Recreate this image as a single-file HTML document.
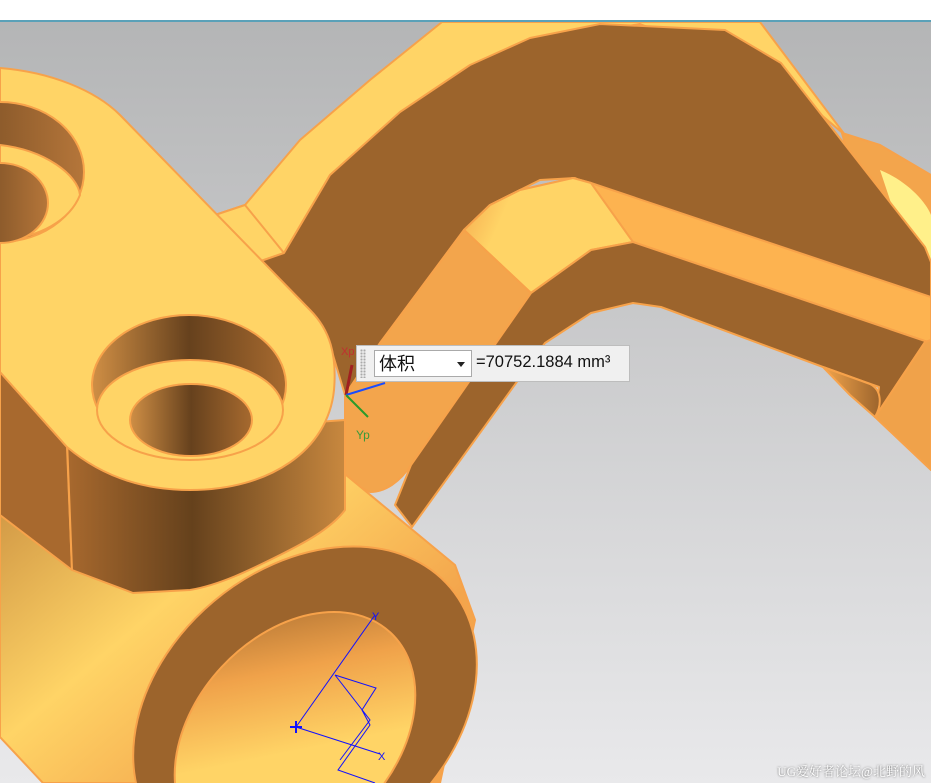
<!DOCTYPE html>
<html><head><meta charset="utf-8"><style>
html,body{margin:0;padding:0;width:931px;height:783px;overflow:hidden;background:#fff}
.top{position:absolute;left:0;top:0;width:931px;height:20px;background:#fff;border-bottom:2px solid #5aa1b8}
svg{position:absolute;left:0;top:0;display:block}
.box{position:absolute;left:356px;top:345px;width:272px;height:35px;background:#f0f0f0;border:1px solid #bdbdbd;font-family:"Liberation Sans","Noto Sans CJK SC",sans-serif}
.grip{position:absolute;left:3px;top:3px;width:6px;height:29px;background-image:radial-gradient(#aaa 1px,transparent 1.2px);background-size:3px 3px}
.sel{position:absolute;left:17px;top:4px;width:98px;height:27px;background:#fff;border:1px solid #aaa;font-size:18px;line-height:27px;padding-left:4px;box-sizing:border-box;color:#111}
.sel:after{content:"";position:absolute;right:6px;top:11px;border-left:4px solid transparent;border-right:4px solid transparent;border-top:5px solid #222}
.val{position:absolute;left:119px;top:7px;font-size:16.5px;color:#111}
.wm{position:absolute;right:6px;bottom:4px;font-family:"Liberation Serif","Noto Serif CJK SC",serif;font-size:13px;line-height:15px;color:#fff;text-shadow:0 0 2px #555}
</style></head><body>
<svg width="931" height="783" viewBox="0 0 931 783">
<defs>
<linearGradient id="bg" x1="0" y1="0" x2="0" y2="1"><stop offset="0" stop-color="#b4b5b6"/><stop offset="1" stop-color="#e9e9eb"/></linearGradient>
<linearGradient id="wall" x1="0" x2="1"><stop offset="0" stop-color="#a8692e"/><stop offset=".45" stop-color="#65411c"/><stop offset="1" stop-color="#c8883f"/></linearGradient>
<linearGradient id="hole" x1="0" x2="1"><stop offset="0" stop-color="#d08f45"/><stop offset=".5" stop-color="#66411d"/><stop offset="1" stop-color="#a76a2f"/></linearGradient>
<linearGradient id="hole2" x1="0" x2="1"><stop offset="0" stop-color="#66411d"/><stop offset="1" stop-color="#b5763a"/></linearGradient>
<linearGradient id="cyl" x1="0" y1="0" x2="1" y2="1"><stop offset="0" stop-color="#b87834"/><stop offset=".45" stop-color="#ffd466"/><stop offset=".75" stop-color="#f3a54c"/></linearGradient>
<linearGradient id="inner" x1="0" y1="1" x2="1" y2="0"><stop offset="0" stop-color="#ffd466"/><stop offset=".45" stop-color="#ffd466"/><stop offset=".7" stop-color="#f0a24a"/><stop offset="1" stop-color="#9c642c"/></linearGradient>
<linearGradient id="bend" x1="0" y1="0" x2="1" y2="0.3"><stop offset="0" stop-color="#f3a54c"/><stop offset=".3" stop-color="#ffd466"/><stop offset="1" stop-color="#ffd466"/></linearGradient>
<linearGradient id="loop" x1="0" x2="1"><stop offset="0" stop-color="#f3a54c"/><stop offset="1" stop-color="#9c642c"/></linearGradient>
</defs>
<rect x="0" y="22" width="931" height="761" fill="url(#bg)"/>
<g stroke="#f7a24a" stroke-width="2" stroke-linejoin="round">
<path d="M215,215 L245,205 L300,140 L370,80 L442,22 L760,22 L845,135 L780,80 L640,24 L520,45 L400,115 L330,175 L284,253 Z" fill="#ffd466"/>
<path d="M245,205 L215,215 L258,262 L284,253 Z" fill="#ffd466"/>
<path d="M842,133 L880,145 L931,175 L931,305 L900,290 L860,200 Z" fill="#f3a54c"/>
<path d="M880,170 C905,180 925,200 931,215 L931,260 L905,245 Z" fill="#fff08a" stroke="none"/>
<path d="M258,262 L284,253 L330,175 L400,112 L470,65 L530,38 L600,24 L725,30 L781,63 L925,247 L931,262 L931,300 L929,297 L600,190 L575,178 L540,180 L490,205 L464,230 L380,343 L345,395 L330,345 L300,300 Z" fill="#9c642c"/>
<path d="M464,230 L490,205 L520,190 L573,178 L591,183 L931,297 L931,343 L633,242 L591,250 L531,293 Z" fill="#fdb350"/>
<path d="M464,230 L490,205 L520,190 L573,178 L591,183 L633,242 L591,250 L531,293 Z" fill="url(#bend)"/>
<path d="M464,230 L531,293 L411,465 C400,482 385,492 370,492 L345,480 L345,395 L380,343 Z" fill="#f3a54c"/>
<path d="M531,293 L591,250 L633,242 L931,343 L931,346 L925,342 L875,417 L879,387 L823,367 L661,307 L633,303 L591,313 L545,343 L412,527 L395,505 L411,465 Z" fill="#9c642c"/>
<path d="M823,367 L870,384 C882,390 882,405 875,417 L850,395 Z" fill="url(#loop)"/>
<path d="M925,342 L931,340 L931,470 L875,417 Z" fill="#f0a24a"/>
<path d="M0,380 L340,470 L455,565 L475,620 L440,783 L43,783 L0,737 Z" fill="url(#cyl)"/>
<path d="M0,372 L67,447 L72,570 L0,515 Z" fill="#a8692e"/>
<path d="M67,440 L345,420 L345,510 C330,530 300,545 280,555 C250,570 220,585 190,590 L133,593 L72,570 Z" fill="url(#wall)"/>
<path d="M0,68 C50,72 95,90 120,115 L310,310 C330,330 337,355 334,390 C328,450 270,490 190,490 C140,490 100,475 67,447 L0,372 Z" fill="#ffd466"/>
<ellipse cx="0" cy="172" rx="84" ry="70" fill="url(#hole2)"/>
<path d="M0,145 C45,150 78,175 80,195 C70,220 40,238 0,240 Z" fill="#ffd466"/>
<ellipse cx="0" cy="203" rx="48" ry="40" fill="url(#hole2)"/>
<ellipse cx="189" cy="385" rx="97" ry="70" fill="url(#hole)"/>
<ellipse cx="190" cy="410" rx="93" ry="50" fill="#ffd466"/>
<ellipse cx="191" cy="420" rx="61" ry="36" fill="url(#hole)"/>
<ellipse cx="305" cy="710" rx="190" ry="142" transform="rotate(-40 305 710)" fill="#9c642c"/>
<ellipse cx="295" cy="735" rx="140" ry="100" transform="rotate(-47 295 735)" fill="url(#inner)"/>
</g>
<g stroke="#1010ff" stroke-width="1" fill="none">
<path d="M296,727 L375,615 M296,727 L380,754 M335,675 L376,688 L362,710 L370,725 L338,770 L375,783 M335,675 L370,720 L340,760"/>
<path d="M290,727 H302 M296,721 V733" stroke-width="2"/>
</g>
<text x="372" y="620" font-family="Liberation Sans" font-size="11" fill="#1010ff">Y</text>
<text x="378" y="760" font-family="Liberation Sans" font-size="11" fill="#1010ff">X</text>
<path d="M346,395 L352,365" stroke="#a02020" stroke-width="3"/>
<path d="M346,395 L385,383" stroke="#1a4cff" stroke-width="2"/>
<path d="M346,395 L368,417" stroke="#2a9a2a" stroke-width="2"/>
<text x="341" y="355" font-family="Liberation Sans" font-size="11" fill="#c03030">Xp</text>
<text x="356" y="439" font-family="Liberation Sans" font-size="12" fill="#3a9a3a">Yp</text>
</svg>
<div class="top"></div>
<div class="box"><div class="grip"></div><div class="sel">体积</div><div class="val">=70752.1884 mm³</div></div>
<div class="wm">UG爱好者论坛@北野的风</div>
</body></html>
